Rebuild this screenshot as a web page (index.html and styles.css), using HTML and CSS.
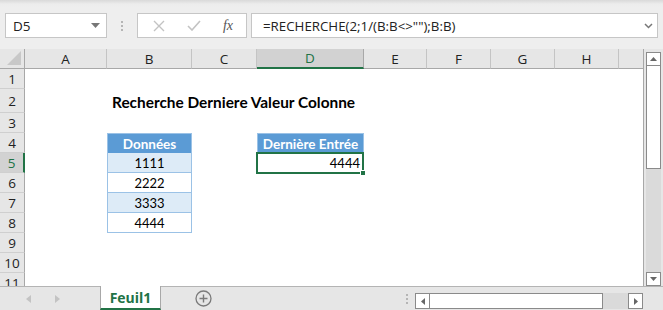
FILE: index.html
```html
<!DOCTYPE html>
<html lang="fr">
<head>
<meta charset="utf-8">
<title>Feuil1</title>
<link rel="stylesheet" href="styles.css">
</head>
<body>
<div class="app">
  <div class="fbar">
    <div class="namebox">
      <span class="nb-text">D5</span>
      <svg class="nb-caret" width="9" height="5" viewBox="0 0 9 5"><path d="M0 0H9L4.5 5Z" fill="#777"/></svg>
    </div>
    <div class="grip"><i></i><i></i><i></i></div>
    <div class="fbtns">
      <svg width="12" height="12" viewBox="0 0 12 12"><path d="M1 1L11 11M11 1L1 11" stroke="#c3c3c3" stroke-width="1.4" fill="none"/></svg>
      <svg width="14" height="11" viewBox="0 0 14 11"><path d="M1 6L5 10L13 1" stroke="#c3c3c3" stroke-width="1.6" fill="none"/></svg>
      <span class="fx">fx</span>
    </div>
    <div class="formula">
      <span class="ftext">=RECHERCHE(2;1/(B:B&lt;&gt;"");B:B)</span>
      <svg class="fchev" width="9" height="6" viewBox="0 0 9 6"><path d="M1 1L4.5 4.5L8 1" stroke="#777" stroke-width="1.5" fill="none"/></svg>
    </div>
  </div>
  <div class="main">
    <div class="sheet">
      <div class="corner"><svg width="14" height="14" viewBox="0 0 14 14"><path d="M14 0V14H0Z" fill="#c8c8c8"/></svg></div>
      <div class="ch">A</div>
      <div class="ch">B</div>
      <div class="ch">C</div>
      <div class="ch ch-sel">D</div>
      <div class="ch">E</div>
      <div class="ch">F</div>
      <div class="ch">G</div>
      <div class="ch">H</div>
      <div class="ch ch-last"></div>

      <div class="rh">1</div>
      <div class="rh">2</div>
      <div class="rh">3</div>
      <div class="rh">4</div>
      <div class="rh rh-sel">5</div>
      <div class="rh">6</div>
      <div class="rh">7</div>
      <div class="rh">8</div>
      <div class="rh">9</div>
      <div class="rh">10</div>
      <div class="rh">11</div>

      <div class="title">Recherche Derniere Valeur Colonne</div>

      <div class="tbl tbl-head b4">Données</div>
      <div class="tbl tbl-band b5">1111</div>
      <div class="tbl b6">2222</div>
      <div class="tbl tbl-band b7">3333</div>
      <div class="tbl b8">4444</div>

      <div class="tbl tbl-head d4">Dernière Entrée</div>
      <div class="d5">4444<span class="handle"></span></div>
    </div>
    <div class="vscroll">
      <div class="sbtn sbtn-up"><svg width="7" height="4" viewBox="0 0 7 4"><path d="M0 4H7L3.5 0Z" fill="#666"/></svg></div>
      <div class="vtrack"><div class="vthumb"></div></div>
      <div class="sbtn sbtn-down"><svg width="7" height="4" viewBox="0 0 7 4"><path d="M0 0H7L3.5 4Z" fill="#666"/></svg></div>
    </div>
  </div>
  <div class="tabs">
    <div class="tabnav">
      <svg width="5" height="8" viewBox="0 0 5 8"><path d="M5 0V8L0 4Z" fill="#c3c3c3"/></svg>
      <svg width="5" height="8" viewBox="0 0 5 8"><path d="M0 0V8L5 4Z" fill="#c3c3c3"/></svg>
    </div>
    <div class="tab">Feuil1</div>
    <div class="addsheet"><svg width="17" height="17" viewBox="0 0 17 17"><circle cx="8.5" cy="8.5" r="7.5" stroke="#7a7a7a" stroke-width="1.3" fill="none"/><path d="M8.5 4.5V12.5M4.5 8.5H12.5" stroke="#7a7a7a" stroke-width="1.4"/></svg></div>
    <div class="tabspace"></div>
    <div class="grip grip-h"><i></i><i></i><i></i></div>
    <div class="hscroll">
      <div class="sbtn hbtn"><svg width="4" height="7" viewBox="0 0 4 7"><path d="M4 0V7L0 3.5Z" fill="#666"/></svg></div>
      <div class="hthumb"></div>
      <div class="htrack"></div>
      <div class="sbtn hbtn"><svg width="4" height="7" viewBox="0 0 4 7"><path d="M0 0V7L4 3.5Z" fill="#666"/></svg></div>
    </div>
  </div>
</div>
</body>
</html>
```
FILE: styles.css
```css
* { box-sizing: border-box; }
html, body { margin: 0; padding: 0; }
body {
  width: 663px;
  height: 310px;
  overflow: hidden;
  background: #e6e6e6;
  font-family: "Open Sans", "Noto Sans", sans-serif;
}
.app {
  display: flex;
  flex-direction: column;
  width: 663px;
  height: 310px;
}

/* formula bar */
.fbar {
  height: 49px;
  flex: none;
  display: flex;
  align-items: flex-start;
  padding: 13px 5px 0 5px;
  background: linear-gradient(#d9d9d9 0, #ececec 4px, #eeeeee 8px);
}
.namebox {
  width: 102px;
  height: 25px;
  background: #fff;
  border: 1px solid #c6c6c6;
  display: flex;
  align-items: center;
  padding: 0 6px 0 7px;
}
.nb-text {
  flex: 1;
  font-size: 13.5px;
  color: #222;
}
.nb-caret { display: block; }
.grip {
  width: 30px;
  height: 25px;
  display: flex;
  flex-direction: column;
  align-items: center;
  justify-content: center;
  gap: 2px;
}
.grip i {
  display: block;
  width: 2px;
  height: 2px;
  background: #b5b5b5;
}
.fbtns {
  width: 110px;
  height: 25px;
  background: #fff;
  border: 1px solid #c6c6c6;
  display: flex;
  align-items: center;
  justify-content: space-between;
  padding: 0 13px 0 15px;
}
.fbtns svg { display: block; }
.fx {
  font-family: "Liberation Serif", "DejaVu Serif", serif;
  font-style: italic;
  font-size: 14px;
  color: #555;
}
.formula {
  margin-left: 4px;
  flex: 1;
  height: 25px;
  background: #fff;
  border: 1px solid #c6c6c6;
  display: flex;
  align-items: center;
  padding: 0 4px 0 11px;
}
.ftext {
  flex: 1;
  font-size: 13.3px;
  color: #222;
  white-space: nowrap;
}
.fchev { display: block; }

/* main */
.main {
  height: 237px;
  flex: none;
  display: flex;
}
.sheet {
  width: 644px;
  height: 237px;
  overflow: hidden;
  background: #fff;
  border-right: 1px solid #a8a8a8;
  display: grid;
  grid-template-columns: 25px 82px 85px 65px 107px 63px 64px 64px 64px 1fr;
  grid-template-rows: 20px 20px 24px repeat(9, 20px);
  align-content: start;
}
.corner {
  background: #e6e6e6;
  border-right: 1px solid #a8a8a8;
  border-bottom: 1px solid #a8a8a8;
  display: flex;
  align-items: flex-end;
  justify-content: flex-end;
  padding: 0 3px 3px 0;
}
.corner svg { display: block; }
.ch {
  background: #e6e6e6;
  border-right: 1px solid #c4c4c4;
  border-bottom: 1px solid #a8a8a8;
  display: flex;
  align-items: center;
  justify-content: center;
  font-size: 13.5px;
  color: #222;
}
.ch-last { border-right: none; }
.ch-sel {
  background: #d2d2d2;
  border-bottom: 2px solid #217346;
  color: #217346;
  border-right-color: #a8a8a8;
}
.rh {
  grid-column: 1;
  background: #e6e6e6;
  border-right: 1px solid #a8a8a8;
  border-bottom: 1px solid #cfcfcf;
  display: flex;
  align-items: center;
  justify-content: center;
  font-size: 13.5px;
  color: #222;
}
.rh-sel {
  background: #d2d2d2;
  border-right: 2px solid #217346;
  color: #217346;
}

.title {
  grid-row: 3;
  grid-column: 3 / span 5;
  font-family: "Lato", "Liberation Sans", sans-serif;
  font-weight: bold;
  font-size: 15.4px;
  color: #000;
  padding: 1px 0 0 5px;
  display: flex;
  align-items: center;
  white-space: nowrap;
}

.tbl {
  grid-column: 3;
  font-family: "Lato", "Liberation Sans", sans-serif;
  font-size: 13px;
  color: #000;
  display: flex;
  align-items: center;
  justify-content: center;
  border-left: 1px solid #9bc2e6;
  border-right: 1px solid #9bc2e6;
  border-bottom: 1px solid #9bc2e6;
  background: #fff;
}
.tbl-head {
  background: #5b9bd5;
  color: #fff;
  font-weight: bold;
  font-size: 13.5px;
  border-top: 1px solid #9bc2e6;
  border-bottom: none;
}
.tbl-band { background: #ddebf7; }
.b4 { grid-row: 5; }
.b5 { grid-row: 6; }
.b6 { grid-row: 7; }
.b7 { grid-row: 8; }
.b8 { grid-row: 9; }
.d4 { grid-row: 5; grid-column: 5; }
.d5 {
  grid-row: 6;
  grid-column: 5;
  position: relative;
  margin: -1px 0 -1px -1px;
  border: 2px solid #217346;
  display: flex;
  align-items: center;
  justify-content: flex-end;
  padding-right: 2px;
  font-family: "Lato", "Liberation Sans", sans-serif;
  font-size: 13px;
  color: #000;
}
.handle {
  position: absolute;
  right: -4px;
  bottom: -4px;
  width: 6px;
  height: 6px;
  background: #217346;
  border: 1px solid #fff;
}

/* vertical scrollbar */
.vscroll {
  flex: 1;
  display: flex;
  flex-direction: column;
  padding: 3px 2px 0 2px;
  background: #e6e6e6;
}
.sbtn {
  background: #fff;
  border: 1px solid #8a8a8a;
  display: flex;
  align-items: center;
  justify-content: center;
  flex: none;
}
.sbtn svg { display: block; }
.sbtn-up, .sbtn-down { height: 14px; }
.vtrack {
  flex: 1;
  background: #dadada;
  display: flex;
  flex-direction: column;
}
.vthumb {
  height: 103px;
  background: #fff;
  border: 1px solid #8a8a8a;
  border-top: none;
}

/* tabs */
.tabs {
  flex: 1;
  display: flex;
  align-items: stretch;
  border-top: 1px solid #b4b4b4;
  background: #e6e6e6;
}
.tabnav {
  width: 100px;
  display: flex;
  align-items: center;
  padding-left: 26px;
  gap: 24px;
}
.tabnav svg { display: block; }
.tab {
  width: 61px;
  margin-top: -1px;
  background: #fff;
  border-left: 1px solid #a8a8a8;
  border-right: 1px solid #a8a8a8;
  border-bottom: 2px solid #217346;
  display: flex;
  align-items: center;
  justify-content: center;
  font-family: "Open Sans", "Noto Sans", sans-serif;
  font-weight: bold;
  font-size: 14px;
  color: #217346;
}
.addsheet {
  width: 84px;
  display: flex;
  align-items: center;
  justify-content: center;
}
.addsheet svg { display: block; }
.tabspace { flex: 1; }
.grip-h {
  width: 16px;
  height: auto;
}
.hscroll {
  width: 228px;
  margin: 6px 20px 1px 0;
  display: flex;
}
.hbtn { width: 15px; }
.hthumb {
  width: 173px;
  background: #fff;
  border: 1px solid #8a8a8a;
  border-left: none;
}
.htrack {
  flex: 1;
  background: #dadada;
}
```
